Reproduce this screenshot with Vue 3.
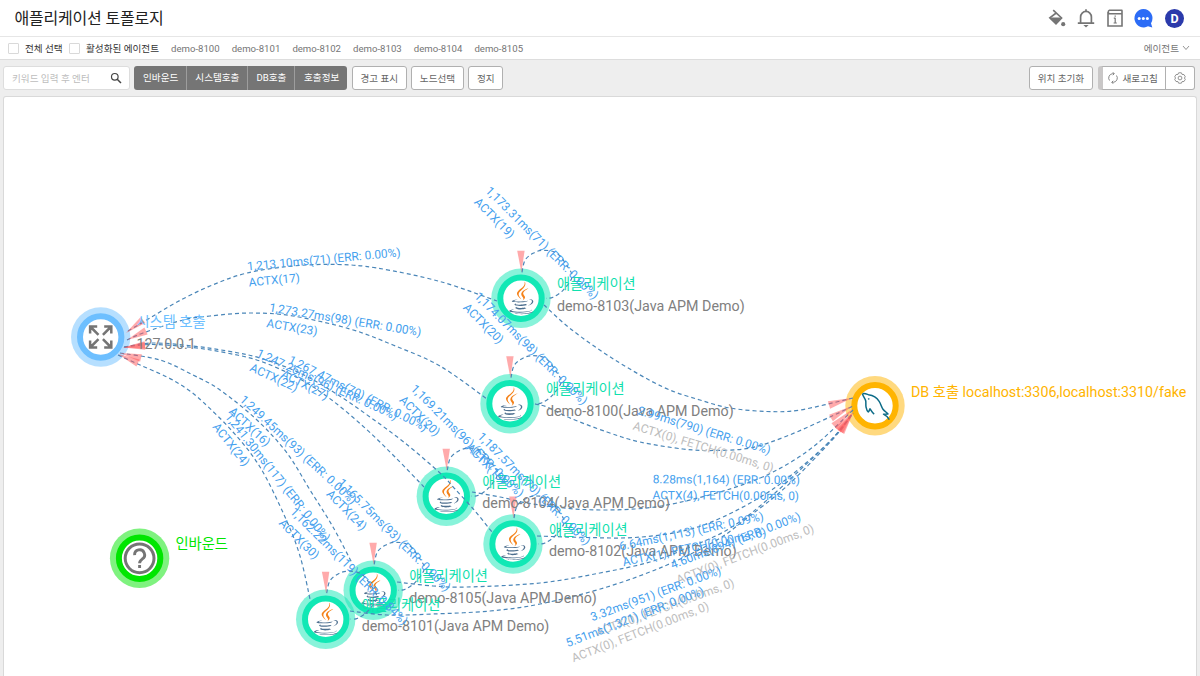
<script setup>
const agents = ['demo-8100', 'demo-8101', 'demo-8102', 'demo-8103', 'demo-8104', 'demo-8105']
const filters = ['인바운드', '시스템호출', 'DB호출', '호출정보']
const actions = ['경고 표시', '노드선택', '정지']

const apps = [
  { name: 'demo-8103', x: 521, y: 298.3, self: ['1,173.31ms(71) (ERR: 0.00%)', 'ACTX(19)'] },
  { name: 'demo-8100', x: 510, y: 403.7, self: ['1,174.07ms(98) (ERR: 0.00%)', 'ACTX(20)'] },
  { name: 'demo-8104', x: 446.3, y: 496.2, self: ['1,169.21ms(96) (ERR: 0.00%)', 'ACTX(20)'] },
  { name: 'demo-8102', x: 513, y: 544, self: ['1,187.57ms(70) (ERR: 0.00%)', 'ACTX(19)'] },
  { name: 'demo-8105', x: 373.2, y: 590.3, self: ['1,165.75ms(93) (ERR: 0.00%)', 'ACTX(24)'] },
  { name: 'demo-8101', x: 325.7, y: 619.2, self: ['1,162.22ms(119) (ERR: 0.84%)', 'ACTX(30)'] },
]

const edges = [
  [[128, 331], [150, 318], [177, 302], [210, 286], [247, 273], [293, 266], [337, 264.5], [377, 268], [440, 281.5], [497, 301]],
  [[127, 340], [143, 333], [183, 320], [210, 316], [250, 313], [293, 316], [350, 329], [393, 345], [440, 366], [487, 399]],
  [[124, 347], [153, 343], [193, 346], [227, 351], [260, 358], [300, 373], [335, 393], [370, 417], [405, 443], [440, 473], [455, 489], [475, 511], [492, 532]],
  [[124, 347], [153, 344.5], [193, 347.5], [227, 353], [260, 361], [300, 379], [333, 401], [365, 428], [395, 457], [424, 487]],
  [[120, 353], [160, 360], [193, 375], [220, 390], [257, 420], [287, 453], [310, 490], [333, 527], [353, 565]],
  [[118, 355], [140, 365], [167, 377], [187, 389], [203, 402], [233, 432], [260, 467], [285, 517], [300, 556], [310, 599]],
  [[544, 305], [572, 330], [615, 360], [663, 387], [700, 400], [730, 408], [767, 411.5], [800, 410], [853, 398]],
  [[535, 404], [547, 407], [570, 418], [607, 432], [640, 442], [683, 449], [713, 450.5], [750, 448], [787, 436], [830, 417], [853, 406]],
  [[472, 492], [500, 497], [533, 504], [583, 509.5], [635, 509], [677, 503], [733, 488], [773, 472], [813, 447], [853, 410]],
  [[537, 536], [587, 537.5], [635, 537.5], [683, 531], [723, 517], [767, 493], [800, 468], [833, 438], [853, 413]],
  [[397, 582], [433, 586], [467, 587], [540, 583], [600, 573], [650, 562], [690, 547], [727, 530], [760, 506], [800, 470], [833, 438], [853, 413]],
  [[350, 611], [387, 615], [433, 614], [490, 611], [540, 604], [607, 587], [667, 565], [717, 540], [747, 518], [787, 486], [833, 439], [853, 413]],
]

const loop = [[1, -26], [4, -38], [12, -45], [22, -48], [36, -45], [47, -31], [51, -21], [42, -8], [32, -1], [25, 0]]

// Catmull-Rom spline through the given points, emitted as cubic segments
function spline(pts) {
  let d = `M${pts[0][0]} ${pts[0][1]}`
  for (let i = 0; i < pts.length - 1; i++) {
    const a = pts[i - 1] || pts[i]
    const b = pts[i]
    const c = pts[i + 1]
    const e = pts[i + 2] || c
    d += `C${b[0] + (c[0] - a[0]) / 6} ${b[1] + (c[1] - a[1]) / 6} ${c[0] - (e[0] - b[0]) / 6} ${c[1] - (e[1] - b[1]) / 6} ${c[0]} ${c[1]}`
  }
  return d
}

const arrows = [
  [126, 333, 143, 320], [127, 340, 146, 331], [123, 347.5, 145, 345], [123, 347.5, 145, 346],
  [120, 353, 141, 358], [118, 354, 138, 363],
  [852, 398, 829, 405], [852, 406, 831, 418], [853, 409, 834, 426],
  [853, 412, 838, 430], [853, 413, 840, 431], [853, 413, 841, 432],
]

function wedge([tx, ty, bx, by]) {
  const len = Math.hypot(bx - tx, by - ty)
  const nx = (-(by - ty) / len) * 3.8
  const ny = ((bx - tx) / len) * 3.8
  return `${tx},${ty} ${bx + nx},${by + ny} ${bx - nx},${by - ny}`
}

const labels = [
  { x: 247.6, y: 270.5, r: -5.3, t: ['1,213.10ms(71) (ERR: 0.00%)', 'ACTX(17)'] },
  { x: 268.7, y: 311.3, r: 9.3, t: ['1,273.27ms(98) (ERR: 0.00%)', 'ACTX(23)'] },
  { x: 255.7, y: 356, r: 24.7, t: ['1,247.26ms(96) (ERR: 0.00%)', 'ACTX(22)'] },
  { x: 287.5, y: 362.5, r: 26.6, t: ['1,267.47ms(70) (ERR: 0.00%)', 'ACTX(27)'] },
  { x: 239, y: 400.5, r: 42.8, t: ['1,249.45ms(93) (ERR: 0.00%)', 'ACTX(16)'] },
  { x: 224.5, y: 417, r: 51.4, t: ['1,241.30ms(117) (ERR: 0.00%)', 'ACTX(24)'] },
  { x: 637, y: 414, r: 17, t: ['2.99ms(790) (ERR: 0.00%)', 'ACTX(0), FETCH(0.00ms, 0)'], idle: true },
  { x: 652.7, y: 483.3, r: 0.3, t: ['8.28ms(1,164) (ERR: 0.00%)', 'ACTX(4), FETCH(0.00ms, 0)'] },
  { x: 620.3, y: 550.5, r: -11.9, t: ['6.64ms(1,113) (ERR: 0.09%)', 'ACTX(1), FETCH(0.00ms, 0)'] },
  { x: 672.5, y: 569, r: -20.9, t: ['4.60ms(894) (ERR: 0.00%)', 'ACTX(0), FETCH(0.00ms, 0)'], idle: true },
  { x: 592.3, y: 621.3, r: -20.1, t: ['3.32ms(951) (ERR: 0.00%)', 'ACTX(0), FETCH(0.00ms, 0)'], idle: true },
  { x: 567.7, y: 647.3, r: -21.2, t: ['5.51ms(1,321) (ERR: 0.00%)', 'ACTX(0), FETCH(0.00ms, 0)'], idle: true },
  ...apps.map(a => ({ x: a.x - 36.2, y: a.y - 106.8, r: 45, t: a.self })),
]
</script>

<template>
  <div class="page">
    <header class="top">
      <h1>애플리케이션 토폴로지</h1>
      <div class="tools">
        <svg class="ic" viewBox="0 0 18 18"><path d="M5.2 1.2 13.6 9 8 14.8 1.8 8.8 8.2 4" fill="none" stroke="#757575" stroke-width="1.6" /><path d="M2 8.5H13.6L8 15Z" fill="#757575" /><circle cx="15.2" cy="15.2" r="2.1" fill="#757575" /></svg>
        <svg class="ic" viewBox="0 0 18 18" fill="none" stroke="#757575" stroke-width="1.7"><path d="M.8 14.2H17.2M3.6 14V8A5.4 5.6 0 0 1 14.4 8V14M9 2.4V.2" /><path d="M6.4 15.9H11.6L9 18.4Z" fill="#757575" stroke="none" /></svg>
        <svg class="ic" viewBox="0 0 18 18" fill="none" stroke="#757575" stroke-width="1.6"><path d="M16.4 1.3H3.4a1.5 1.8 0 0 0 0 3.5H16V17H2V3M16 1.3V4" /><path d="M9.2 8.8V14.2M9.2 6.4V7.7M7.8 9.1H9.2M7.6 14H10.8" stroke-width="1.2" /></svg>
        <svg class="ic chat" viewBox="0 0 19 19"><path d="M9.3 0A9.2 9.2 0 1 0 14 17.3L18.3 18.4 17 14.2A9.2 9.2 0 0 0 9.3 0Z" fill="#2c6cf6" /><circle cx="5.2" cy="9.5" r="1.5" fill="#fff" /><circle cx="9.3" cy="9.5" r="1.5" fill="#fff" /><circle cx="13.4" cy="9.5" r="1.5" fill="#fff" /></svg>
        <span class="avatar">D</span>
      </div>
    </header>

    <div class="agents">
      <i class="check"></i><span class="strong all">전체 선택</span>
      <i class="check"></i><span class="strong act">활성화된 에이전트</span>
      <span v-for="a in agents" :key="a" class="agent">{{ a }}</span>
      <span class="pick">에이전트
        <svg viewBox="0 0 8 6"><path d="M1 1 4 4.5 7 1" fill="none" stroke="#888" stroke-width=".9" /></svg>
      </span>
    </div>

    <div class="bar">
      <div class="search"><span>키워드 입력 후 엔터</span>
        <svg viewBox="0 0 12 12" fill="none" stroke="#444"><circle cx="4.8" cy="4.8" r="3.3" stroke-width="1.2" /><path d="M7.2 7.2 11 11" stroke-width="1.5" /></svg>
      </div>
      <div class="group"><span v-for="f in filters" :key="f">{{ f }}</span></div>
      <button v-for="a in actions" :key="a" class="btn">{{ a }}</button>
      <button class="btn reset">위치 초기화</button>
      <div class="refresh">
        <span class="go">
          <svg viewBox="0 0 12 12" fill="none" stroke="#777" stroke-width=".9"><path d="M7 1.7H5.6A4.3 4.3 0 0 0 2.5 8.5M5 10.3H6.4A4.3 4.3 0 0 0 9.5 3.5M5.8.2 7.3 1.7 5.8 3.2M6.2 8.8 4.7 10.3 6.2 11.8" /></svg>
          <b>새로고침</b>
        </span>
        <span class="gear">
          <svg viewBox="0 0 12 12" fill="none" stroke="#888" stroke-width=".9"><path d="M4.6.8H7.4L8 2.4 10 2.6 11.3 4.8 10.4 6 11.3 7.4 10 9.5 8 9.6 7.4 11.2H4.6L4 9.6 2 9.5.7 7.4 1.6 6 .7 4.8 2 2.6 4 2.4Z" stroke-linejoin="round" /><circle cx="6" cy="6" r="1.9" /></svg>
        </span>
      </div>
    </div>

    <main class="panel">
      <svg class="map" viewBox="4 97 1192 579">
        <defs>
          <g id="java">
            <g transform="translate(-16.5 -17.2) scale(.262)">
              <path fill="#4d6f8f" d="M47.617 98.12s-4.767 2.774 3.397 3.71c9.892 1.13 14.947.968 25.845-1.092 0 0 2.871 1.795 6.873 3.351-24.439 10.47-55.308-.607-36.115-5.969zm-2.988-13.665s-5.348 3.959 2.823 4.805c10.567 1.091 18.91 1.18 33.354-1.6 0 0 1.993 2.025 5.132 3.131-29.542 8.64-62.446.68-41.309-6.336z" />
              <path fill="#f58219" d="M69.802 61.271c6.025 6.935-1.58 13.17-1.58 13.17s15.289-7.891 8.269-17.777c-6.559-9.215-11.587-13.792 15.635-29.58 0 .001-42.731 10.67-22.324 34.187z" />
              <path fill="#4d6f8f" d="M102.123 108.229s3.529 2.91-3.888 5.159c-14.102 4.272-58.706 5.56-71.094.171-4.451-1.938 3.899-4.625 6.526-5.192 2.739-.593 4.303-.485 4.303-.485-4.953-3.487-32.013 6.85-13.743 9.815 49.821 8.076 90.817-3.637 77.896-9.468zM49.912 70.294s-22.686 5.389-8.033 7.348c6.188.828 18.518.638 30.011-.326 9.39-.789 18.813-2.474 18.813-2.474s-3.308 1.419-5.704 3.053c-23.042 6.061-67.544 3.238-54.731-2.958 10.832-5.239 19.644-4.643 19.644-4.643zm40.697 22.747c23.421-12.167 12.591-23.86 5.032-22.285-1.848.385-2.677.72-2.677.72s.688-1.079 2-1.543c14.953-5.255 26.451 15.503-4.823 23.725 0-.002.359-.327.468-.617z" />
              <path fill="#f58219" d="M76.491 1.587S89.459 14.563 64.188 34.51c-20.266 16.006-4.621 25.13-.007 35.559-11.831-10.673-20.509-20.07-14.688-28.815C58.041 28.42 81.722 22.195 76.491 1.587z" />
              <path fill="#4d6f8f" d="M52.214 126.021c22.476 1.437 57-.8 57.817-11.436 0 0-1.571 4.032-18.577 7.231-19.186 3.612-42.854 3.191-56.887.874 0 .001 2.875 2.381 17.647 3.331z" />
            </g>
          </g>
        </defs>

        <g class="node sys" transform="translate(100.7 337)">
          <circle class="halo" r="29.7" /><circle class="ring" r="20.7" />
          <path d="M-10.6-3.5V-10.6H-3.5M3.5-10.6H10.6V-3.5M10.6 3.5V10.6H3.5M-3.5 10.6H-10.6V3.5M-10-10-2.2-2.2M10-10 2.2-2.2M10 10 2.2 2.2M-10 10-2.2 2.2" fill="none" stroke="#757575" stroke-width="2.5" />
        </g>
        <g class="node inb" transform="translate(139.6 558.3)">
          <circle class="halo" r="29.7" /><circle class="ring" r="20.7" />
          <circle r="14.4" fill="none" stroke="#757575" stroke-width="3" />
          <path d="M-5-3.2A5 5 0 1 1 2.6.8C.8 2 0 2.8 0 5M0 6.6V9.6" fill="none" stroke="#757575" stroke-width="2.9" />
        </g>
        <g class="node db" transform="translate(875 405.7)">
          <circle class="halo" r="29.7" /><circle class="ring" r="20.7" />
          <path d="M-12.5-11.8C-11-13-8-11.5-6.5-11 -2-10.5 2-8 4-4.5 6-1.5 6.5 1.5 8 3.5 9.5 5.5 12 7 13 8.2L8.5 8.5C10.5 9.5 13 11.5 14.3 14M-12.5-11.8C-12-9.5-9.8-7-9.3-5 -8.8-3-9.6-1-8.8 2 -8.4 4-8 5.5-6.8 6.2 -5.6 6-5.8 4-5 3.2 -4 4-3 7-.8 8.5M-6.6-7.4-6-6.2" fill="none" stroke="#0c6b87" stroke-width="1.5" stroke-linejoin="round" />
        </g>
        <g v-for="a in apps" :key="a.name" class="node app" :transform="`translate(${a.x} ${a.y})`">
          <circle class="halo" r="29.7" /><circle class="ring" r="20.7" /><use href="#java" />
        </g>

        <g class="edges">
          <path v-for="(e, i) in edges" :key="i" :d="spline(e)" />
          <path v-for="a in apps" :key="a.name" :d="spline(loop)" :transform="`translate(${a.x} ${a.y})`" />
        </g>
        <g class="arrows">
          <polygon v-for="(w, i) in arrows" :key="i" :points="wedge(w)" />
          <polygon v-for="a in apps" :key="a.name" points="-3.8,-47.5 3.6,-47.5 .4,-26" :transform="`translate(${a.x} ${a.y})`" />
        </g>

        <g class="names">
          <text class="sys" x="136.5" y="327">시스템 호출</text><text x="136.5" y="348.7">127.0.0.1</text>
          <text class="inb" x="175.5" y="549">인바운드</text>
          <text class="db" x="911" y="396.5">DB 호출 localhost:3306,localhost:3310/fake</text>
          <g v-for="a in apps" :key="a.name" :transform="`translate(${a.x + 36} ${a.y})`">
            <text class="app" y="-9.3">애플리케이션</text><text y="12.2">{{ a.name }}(Java APM Demo)</text>
          </g>
        </g>
        <g class="labels">
          <g v-for="(l, i) in labels" :key="i" :transform="`translate(${l.x} ${l.y}) rotate(${l.r})`">
            <text>{{ l.t[0] }}</text><text y="16" :class="{ idle: l.idle }">{{ l.t[1] }}</text>
          </g>
        </g>
      </svg>
    </main>
  </div>
</template>

<style>
body { margin: 0; overflow: hidden; }
</style>

<style scoped>
.page { width: 1200px; height: 676px; overflow: hidden; display: flex; flex-direction: column; background: #eee; font-family: Roboto, "Noto Sans CJK KR", sans-serif; font-size: 9.6px; color: #757575; }
.top { box-sizing: border-box; height: 37px; flex: none; display: flex; align-items: center; justify-content: space-between; padding: 0 16px 0 14.5px; background: #fff; border-bottom: 1px solid #e6e6e6; }
h1 { margin: 0; padding-bottom: 2px; font-size: 16px; font-weight: 400; letter-spacing: -.2px; color: #222; }
.tools { display: flex; align-items: center; gap: 11px; }
.ic { width: 18px; height: 18px; overflow: visible; }
.chat { width: 19px; height: 19px; margin-left: -1px; }
.avatar { width: 19px; height: 19px; border-radius: 50%; background: #2b3aab; color: #fff; font-size: 12.5px; font-weight: 700; line-height: 19px; text-align: center; margin-left: 1px; }
.agents { box-sizing: border-box; height: 23px; flex: none; display: flex; align-items: center; padding: 0 10px 0 8px; background: #fff; border-bottom: 1px solid #ddd; white-space: nowrap; }
.check { box-sizing: border-box; width: 11px; height: 11px; flex: none; border: 1px solid #d9d9d9; border-radius: 1px; background: #fff; }
.strong { color: #333; margin-left: 6px; padding-bottom: 1px; }
.all { width: 44px; }
.act { width: 79px; }
.agent { width: 60.7px; }
.act + .agent { margin-left: 6px; }
.pick { margin-left: auto; padding-bottom: 1px; display: flex; align-items: center; gap: 3px; }
.pick svg { width: 8px; height: 6px; }
.bar { height: 36px; flex: none; display: flex; align-items: center; padding: 0 5px 0 3px; }
.search, .group, .btn, .refresh { box-sizing: border-box; height: 24px; display: flex; align-items: center; border-radius: 3px; }
.search { width: 127px; justify-content: space-between; padding: 0 7px 0 8px; border: 1px solid #ddd; background: #fff; color: #bdbdbd; }
.search span { padding-bottom: 1px; }
.search svg { width: 12px; height: 12px; }
.group { width: 213px; margin-left: 4.4px; background: #757575; color: #fff; overflow: hidden; }
.group span { box-sizing: border-box; height: 24px; line-height: 24px; padding-left: 1px; text-align: center; width: 52.5px; border-right: 1px solid #9d9d9d; }
.group span:nth-child(2) { width: 61px; }
.group span:nth-child(3) { width: 47px; }
.group span:last-child { border: 0; }
.btn { margin-left: 4.2px; padding: 0 7.8px 1px; border: 1px solid #b0b0b0; background: #fff; color: #666; font: inherit; white-space: nowrap; }
.reset { margin-left: auto; }
.refresh { margin-left: 5px; width: 97px; border: 1px solid #b0b0b0; border-left: 5px solid #c9c7c7; background: #fff; color: #666; overflow: hidden; }
.go { flex: 1; display: flex; align-items: center; gap: 3.5px; padding-left: 4px; }
.go b { font-weight: 400; padding-bottom: 1px; }
.go svg, .gear svg { width: 12px; height: 12px; }
.gear { width: 28px; height: 24px; display: flex; align-items: center; justify-content: center; border-left: 1px solid #b0b0b0; }
.panel { box-sizing: border-box; width: 1194px; flex: 1; margin-left: 3px; background: #fff; border: 1px solid #d9d9d9; border-bottom: 0; border-radius: 3px 3px 0 0; overflow: hidden; }
.map { display: block; width: 1192px; height: 579px; }
.halo { opacity: .5; }
.ring { fill: #fff; stroke-width: 6; }
.sys .halo { fill: #6dbfff; } .sys .ring { stroke: #6dbfff; }
.inb .halo { fill: #00e600; } .inb .ring { stroke: #00e600; }
.db .halo { fill: #ffb400; } .db .ring { stroke: #ffb400; }
.app .halo { fill: #11e8b5; } .app .ring { stroke: #11e8b5; }
.edges path { fill: none; stroke: #4a86b8; stroke-width: 1.2; stroke-dasharray: 4 3; }
.arrows { fill: #ff5558; fill-opacity: .5; }
.names { font-size: 14.28px; fill: #808080; }
.names .sys { fill: #6dbfff; }
.names .inb { fill: #00e600; }
.names .db { fill: #ffb400; }
.names .app { fill: #11e0ae; }
.labels { font-size: 11.88px; fill: #459fee; }
.labels .idle { fill: #bdbdbd; }
</style>
